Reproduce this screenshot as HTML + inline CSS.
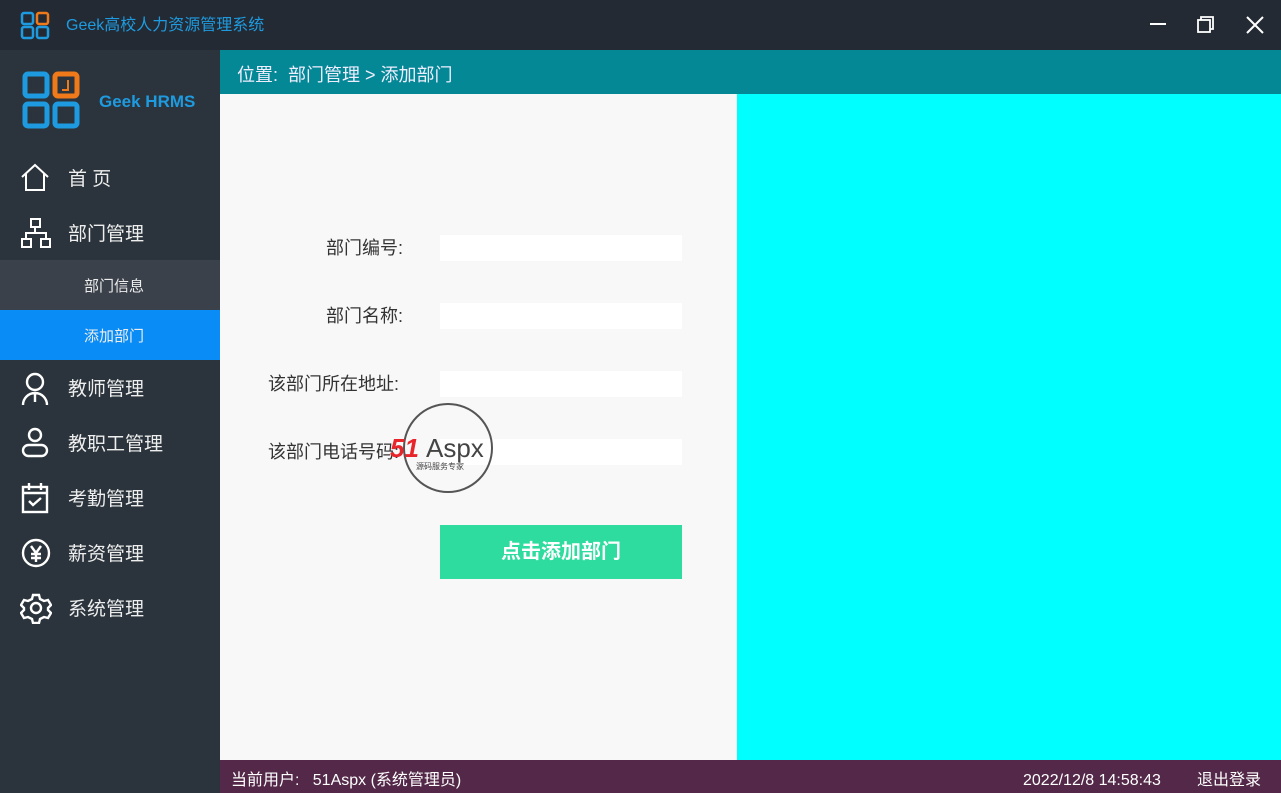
<!DOCTYPE html>
<html style="overflow:hidden"><head><meta charset="utf-8"><style>
*{margin:0;padding:0;box-sizing:border-box}
body{width:1281px;height:793px;overflow:hidden;position:relative;background:#2b343c;font-family:"Liberation Sans","Noto Sans CJK SC",sans-serif}
.top{position:absolute;left:0;top:0;width:1281px;height:50px;background:#232a33}
.title{position:absolute;left:66px;top:16px;color:#1e9be0;font-size:16px;line-height:20px}
.side{position:absolute;left:0;top:50px;width:220px;height:743px;background:#2b343c}
.nav{position:absolute;left:0;width:220px;height:55px;color:#eee;font-size:19px}
.nav span{position:absolute;left:68px;top:14px}
.nav svg{position:absolute;left:20px;top:12px}
.sub{position:absolute;left:0;width:220px;height:50px;color:#eee;font-size:15px}
.sub span{position:absolute;left:84px;top:15px}
.crumb{position:absolute;left:220px;top:50px;width:1061px;height:44px;background:#058896;color:#eef;font-size:18px}
.crumb span{position:absolute;left:17px;top:11px}
.form{position:absolute;left:220px;top:94px;width:517px;height:666px;background:#f8f8f8}
.cyan{position:absolute;left:737px;top:94px;width:544px;height:666px;background:#00ffff}
.lbl{position:absolute;font-size:18px;color:#333;line-height:22px}
.inp{position:absolute;left:440px;width:242px;height:26px;background:#fff}
.btn{position:absolute;left:440px;top:525px;width:242px;height:54px;background:#2ddc9e;color:#fff;font-size:20px;font-weight:bold;text-align:center;line-height:54px}
.foot{position:absolute;left:220px;top:760px;width:1061px;height:33px;background:#532848;color:#fff;font-size:16px;overflow:hidden}
.foot span{position:absolute;top:10px;line-height:22px}
</style></head><body>
<div class="top">
<svg style="position:absolute;left:20px;top:11px" width="30" height="29" viewBox="0 0 30 29" fill="none" stroke-width="2.5"><rect x="2" y="2" width="11" height="11" rx="2" stroke="#1e9be0"/><rect x="17" y="2" width="11" height="11" rx="2" stroke="#f07a1a"/><rect x="2" y="16" width="11" height="11" rx="2" stroke="#1e9be0"/><rect x="17" y="16" width="11" height="11" rx="2" stroke="#1e9be0"/></svg>
<div class="title">Geek高校人力资源管理系统</div>
<div style="position:absolute;left:1150px;top:23px;width:16px;height:2px;background:#fff"></div>
<svg style="position:absolute;left:1197px;top:16px" width="18" height="18" fill="none" stroke="#fff" stroke-width="1.8"><rect x="1" y="4" width="12" height="12"/><path d="M4 4V1h12v12h-3"/></svg>
<svg style="position:absolute;left:1246px;top:16px" width="18" height="18" stroke="#fff" stroke-width="2"><path d="M1 1L17 17M17 1L1 17"/></svg>
</div>
<div class="side">
<svg style="position:absolute;left:22px;top:21px" width="58" height="58" viewBox="0 0 58 58" fill="none" stroke-width="5"><rect x="3" y="3" width="22" height="22" rx="3" stroke="#1e9be0"/><rect x="33" y="3" width="22" height="22" rx="3" stroke="#f07a1a"/><path d="M46 9v10h-6" stroke="#f07a1a" stroke-width="2"/><rect x="3" y="33" width="22" height="22" rx="3" stroke="#1e9be0"/><rect x="33" y="33" width="22" height="22" rx="3" stroke="#1e9be0"/></svg>
<div style="position:absolute;left:99px;top:42px;color:#1e9be0;font-weight:bold;font-size:17px">Geek HRMS</div>
</div>
<div class="nav" style="top:150px"><svg width="30" height="30" fill="none" stroke="#fff" stroke-width="2"><path d="M2 15L15 3L28 15M6 12v16h18V12"/></svg><span>首 页</span></div>
<div class="nav" style="top:205px"><svg width="32" height="32" fill="none" stroke="#fff" stroke-width="2"><rect x="11" y="2" width="9" height="8"/><rect x="2" y="22" width="9" height="8"/><rect x="21" y="22" width="9" height="8"/><path d="M15 10v6M6 22v-6h20v6"/></svg><span>部门管理</span></div>
<div class="sub" style="top:260px;background:#3b414b"><span>部门信息</span></div>
<div class="sub" style="top:310px;background:#0a8cf7"><span>添加部门</span></div>
<div class="nav" style="top:360px"><svg width="30" height="34" fill="none" stroke="#fff" stroke-width="2.4"><circle cx="15" cy="10" r="8"/><path d="M3 33a12 12 0 0 1 24 0M15 20v10"/></svg><span>教师管理</span></div>
<div class="nav" style="top:415px"><svg width="30" height="32" fill="none" stroke="#fff" stroke-width="2.4"><circle cx="15" cy="8" r="6"/><rect x="3" y="18" width="24" height="11" rx="5.5"/></svg><span>教职工管理</span></div>
<div class="nav" style="top:470px"><svg width="30" height="32" fill="none" stroke="#fff" stroke-width="2.4"><rect x="3" y="5" width="24" height="25"/><path d="M9 1v7M21 1v7M3 11h24M9 19l4 4 8-7"/></svg><span>考勤管理</span></div>
<div class="nav" style="top:525px"><svg width="32" height="32" fill="none" stroke="#fff" stroke-width="2.4"><circle cx="16" cy="16" r="13"/><path d="M11 9l5 7 5-7M16 16v9M11 17h10M11 21h10"/></svg><span>薪资管理</span></div>
<div class="nav" style="top:580px"><svg width="32" height="32" fill="none" stroke="#fff" stroke-width="2.4"><path d="M13 3h6l1 4 4 2 4-1 3 5-3 3v2l3 3-3 5-4-1-4 2-1 4h-6l-1-4-4-2-4 1-3-5 3-3v-2l-3-3 3-5 4 1 4-2z"/><circle cx="16" cy="16" r="5"/></svg><span>系统管理</span></div>
<div class="crumb"><span>位置:&nbsp;&nbsp;部门管理 &gt; 添加部门</span></div>
<div class="form"></div>
<div class="cyan"></div>
<div class="lbl" style="top:237px;left:326px">部门编号:</div>
<div class="lbl" style="top:305px;left:326px">部门名称:</div>
<div class="lbl" style="top:373px;left:268px">该部门所在地址:</div>
<div class="lbl" style="top:441px;left:268px">该部门电话号码:</div>
<div class="inp" style="top:235px"></div>
<div class="inp" style="top:303px"></div>
<div class="inp" style="top:371px"></div>
<div class="inp" style="top:439px"></div>
<svg style="position:absolute;left:388px;top:400px" width="130" height="96"><circle cx="60" cy="48" r="44" fill="none" stroke="#555" stroke-width="2"/><text x="2" y="57" font-family="Liberation Sans" font-style="italic" font-weight="bold" font-size="26" fill="#e8252b">51</text><text x="38" y="57" font-family="Liberation Sans" font-size="26" fill="#444">Aspx</text><text x="28" y="69" font-size="8" fill="#444" font-family="Noto Sans CJK SC">源码服务专家</text></svg>
<div class="btn">点击添加部门</div>
<div class="foot"><span style="left:11px">当前用户:&nbsp;&nbsp;&nbsp;51Aspx (系统管理员)</span><span style="left:803px">2022/12/8 14:58:43</span><span style="left:977px">退出登录</span></div>
</body></html>
